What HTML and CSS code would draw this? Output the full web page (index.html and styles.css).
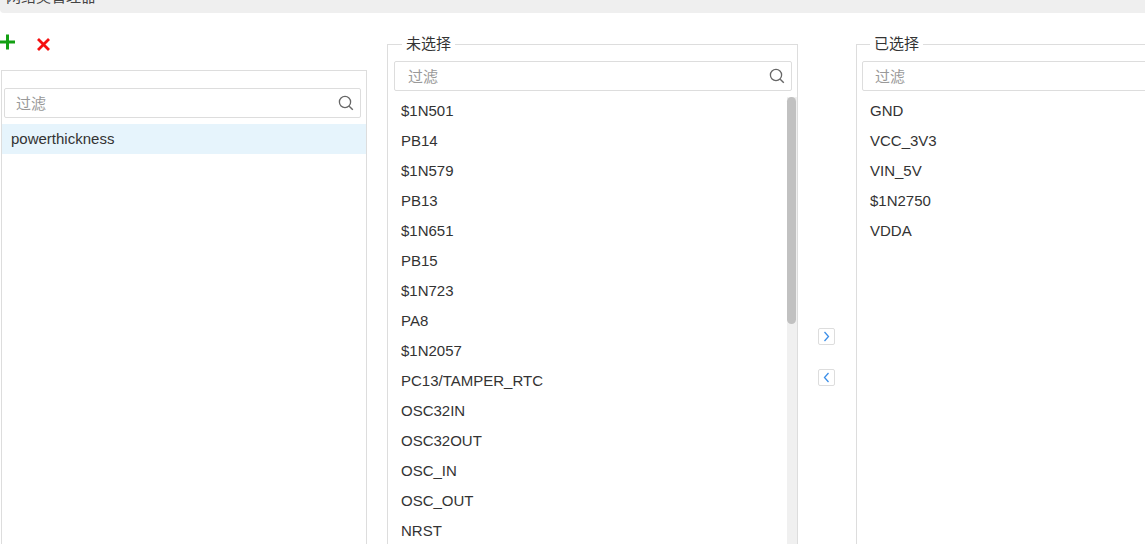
FILE: index.html
```html
<!DOCTYPE html>
<html lang="zh-CN">
<head>
    <meta charset="UTF-8">
    <title>网络类管理器</title>
    <link rel="stylesheet" href="styles.css">
</head>
<body>
    <div class="titlebar"><span>网络类管理器</span></div>
    <div class="main">
        <div class="left">
            <div class="toolbar">
                <svg class="tool" width="16" height="16" viewBox="0 0 16 16"><path d="M7.5 0.5v15M0 8h15" stroke="#13a013" stroke-width="3"/></svg>
                <svg class="tool del" width="16" height="16" viewBox="0 0 16 16"><path d="M2 3l11 11M13 3L2 14" stroke="#f51010" stroke-width="2.8"/></svg>
            </div>
            <div class="panel">
                <div class="search">
                    <input type="text" placeholder="过滤">
                    <svg width="16" height="16" viewBox="0 0 16 16"><circle cx="7" cy="7" r="5.6" fill="none" stroke="#666" stroke-width="1.3"/><path d="M11.2 11.2l3.6 3.6" stroke="#666" stroke-width="1.4"/></svg>
                </div>
                <div class="class-row selected">powerthickness</div>
            </div>
        </div>

        <fieldset class="box mid">
            <legend>未选择</legend>
            <div class="search">
                <input type="text" placeholder="过滤">
                <svg width="16" height="16" viewBox="0 0 16 16"><circle cx="7" cy="7" r="5.6" fill="none" stroke="#666" stroke-width="1.3"/><path d="M11.2 11.2l3.6 3.6" stroke="#666" stroke-width="1.4"/></svg>
            </div>
            <div class="list-wrap">
                <ul class="list">
                    <li>$1N501</li>
                    <li>PB14</li>
                    <li>$1N579</li>
                    <li>PB13</li>
                    <li>$1N651</li>
                    <li>PB15</li>
                    <li>$1N723</li>
                    <li>PA8</li>
                    <li>$1N2057</li>
                    <li>PC13/TAMPER_RTC</li>
                    <li>OSC32IN</li>
                    <li>OSC32OUT</li>
                    <li>OSC_IN</li>
                    <li>OSC_OUT</li>
                    <li>NRST</li>
                </ul>
                <div class="scrollbar"><div class="thumb"></div></div>
            </div>
        </fieldset>

        <div class="transfer">
            <button class="move"><svg width="9" height="11" viewBox="0 0 9 11"><path d="M2.5 1l4 4.5-4 4.5" fill="none" stroke="#3d8fe8" stroke-width="1.3"/></svg></button>
            <button class="move back"><svg width="9" height="11" viewBox="0 0 9 11"><path d="M6.5 1l-4 4.5 4 4.5" fill="none" stroke="#3d8fe8" stroke-width="1.3"/></svg></button>
        </div>

        <fieldset class="box right">
            <legend>已选择</legend>
            <div class="search">
                <input type="text" placeholder="过滤">
            </div>
            <ul class="list">
                <li>GND</li>
                <li>VCC_3V3</li>
                <li>VIN_5V</li>
                <li>$1N2750</li>
                <li>VDDA</li>
            </ul>
        </fieldset>
    </div>
</body>
</html>
```

FILE: styles.css
```css
* {
    box-sizing: border-box;
}

body {
    margin: 0;
    width: 1145px;
    height: 544px;
    overflow: hidden;
    background: #fff;
    color: #333;
    font-family: "Liberation Sans", "Noto Sans CJK SC", sans-serif;
    font-size: 15px;
}

.titlebar {
    height: 13px;
    overflow: hidden;
    background: #efefef;
    border-bottom-left-radius: 4px;
    padding-left: 6px;
}

.titlebar span {
    display: block;
    line-height: 20px;
    margin-top: -13px;
    color: #444;
}

.main {
    display: flex;
    align-items: flex-start;
}

/* left column */
.left {
    width: 367px;
    flex-shrink: 0;
}

.toolbar {
    height: 57px;
    padding-top: 21px;
    display: flex;
    gap: 20px;
}

.tool.del {
    margin-top: 2px;
}

.panel {
    margin-left: 1px;
    height: 480px;
    border: 1px solid #ddd;
    padding: 17px 5px 0 2px;
}

.search {
    height: 30px;
    border: 1px solid #ddd;
    border-radius: 2px;
    display: flex;
    align-items: center;
    padding: 0 6px 0 11px;
}

.search input {
    flex: 1;
    min-width: 0;
    border: none;
    outline: none;
    padding: 0;
    font: inherit;
    color: #333;
    background: transparent;
}

.search input::placeholder {
    color: #999;
}

.class-row {
    margin: 6px -5px 0 -2px;
    height: 30px;
    line-height: 29px;
    padding-left: 9px;
}

.class-row.selected {
    background: #e6f4fc;
}

/* fieldsets */
.box {
    margin: 23px 0 0;
    height: 560px;
    border: 1px solid #ddd;
    padding: 9px 5px 0 6px;
    min-width: 0;
}

.box legend {
    margin-left: 8px;
    padding: 0 4px;
    line-height: 16px;
    color: #333;
}

.mid {
    margin-left: 20px;
    width: 411px;
    flex-shrink: 0;
}

.mid .search input {
    padding-left: 2px;
}

.right {
    width: 320px;
    flex-shrink: 0;
    padding-left: 5px;
}

.right .search {
    padding-left: 12px;
}

.list-wrap {
    display: flex;
    margin-top: 6px;
    margin-right: -5px;
}

.list {
    list-style: none;
    margin: 0;
    padding: 0;
    flex: 1;
}

.right .list {
    margin-top: 6px;
}

.list li {
    height: 30px;
    line-height: 28px;
    padding-left: 7px;
    white-space: nowrap;
}

.right .list li {
    padding-left: 8px;
}

.scrollbar {
    width: 10px;
    background: #f0f0f0;
}

.thumb {
    height: 227px;
    width: 9px;
    background: #c1c1c1;
    border-radius: 5px;
}

/* move buttons */
.transfer {
    width: 58px;
    flex-shrink: 0;
    padding: 315px 0 0 20px;
    display: flex;
    flex-direction: column;
}

.move {
    width: 17px;
    height: 17px;
    padding: 0;
    border: 1px solid #ddd;
    border-radius: 2px;
    background: #fff;
    display: flex;
    align-items: center;
    justify-content: center;
    cursor: pointer;
}

.move.back {
    margin-top: 24px;
}
```
